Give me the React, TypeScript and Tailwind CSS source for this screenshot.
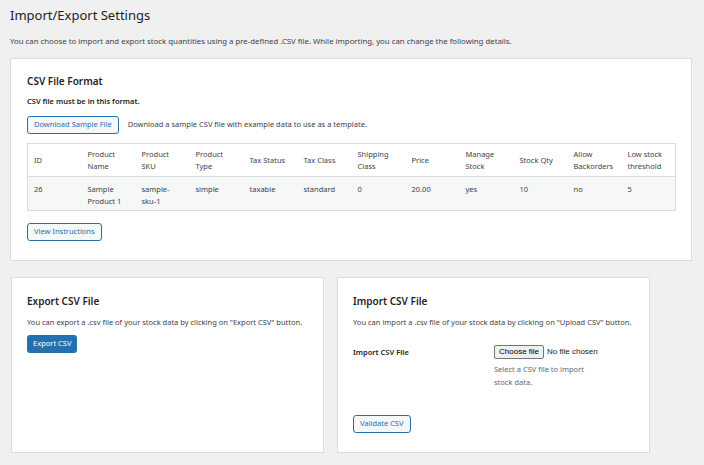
const font = { fontFamily: '"Noto Sans", "Open Sans", sans-serif' };

const columns = [
  "ID",
  "Product Name",
  "Product SKU",
  "Product Type",
  "Tax Status",
  "Tax Class",
  "Shipping Class",
  "Price",
  "Manage Stock",
  "Stock Qty",
  "Allow Backorders",
  "Low stock threshold",
];

const sampleRow = [
  "26",
  "Sample Product 1",
  "sample-sku-1",
  "simple",
  "taxable",
  "standard",
  "0",
  "20.00",
  "yes",
  "10",
  "no",
  "5",
];

function SecondaryButton({ children }: { children: React.ReactNode }) {
  return (
    <button className="h-[18px] rounded-[3px] border border-[#2271b1] bg-[#f6f7f7] px-[6px] text-[7.5px] leading-none text-[#2271b1]">
      {children}
    </button>
  );
}

export default function App() {
  return (
    <div
      className="min-h-[465px] w-[704px] bg-[#f0f0f1] px-[10px] pt-[7px] text-[7.5px] text-[#3c434a]"
      style={font}
    >
      <h1 className="text-[13px] leading-[16px] text-[#1d2327]">Import/Export Settings</h1>
      <p className="mt-[12px] text-[7.8px] leading-[12px]">
        You can choose to import and export stock quantities using a pre-defined .CSV file. While
        importing, you can change the following details.
      </p>

      {/* CSV format card */}
      <section className="mt-[11px] h-[203px] w-[682px] border border-[#dcdcde] bg-white px-[16px] pt-[15px]">
        <h2 className="text-[10px] font-semibold leading-[14px] text-[#1d2327]">CSV File Format</h2>
        <p className="mt-[7px] font-semibold leading-[12px] text-[#1d2327]">
          CSV file must be in this format.
        </p>
        <div className="mt-[9px] flex items-center gap-[9px]">
          <SecondaryButton>Download Sample File</SecondaryButton>
          <span>Download a sample CSV file with example data to use as a template.</span>
        </div>

        <table className="mt-[9px] w-[648px] table-fixed border-collapse border border-[#dcdcde]">
          <thead>
            <tr className="h-[33px] border-b border-[#dcdcde] bg-white">
              {columns.map((c) => (
                <th key={c} className="w-[54px] px-[6px] text-left align-middle font-normal leading-[12px]">
                  {c}
                </th>
              ))}
            </tr>
          </thead>
          <tbody>
            <tr className="h-[34px] bg-[#f6f7f7]">
              {sampleRow.map((v, i) => (
                <td key={i} className="px-[6px] pt-[6px] align-top leading-[12px]">
                  {v}
                </td>
              ))}
            </tr>
          </tbody>
        </table>

        <div className="mt-[12px]">
          <SecondaryButton>View Instructions</SecondaryButton>
        </div>
      </section>

      {/* Export / Import cards */}
      <div className="mt-[16px] flex gap-[13px] pl-[1px]">
        <section className="h-[176px] w-[313px] border border-[#dcdcde] bg-white px-[15px] pt-[16px]">
          <h2 className="text-[10px] font-semibold leading-[14px] text-[#1d2327]">Export CSV File</h2>
          <p className="mt-[8px] leading-[12px]">
            You can export a .csv file of your stock data by clicking on "Export CSV" button.
          </p>
          <button className="mt-[7px] h-[18px] rounded-[3px] bg-[#2271b1] px-[6px] text-[7.5px] leading-none text-white">
            Export CSV
          </button>
        </section>

        <section className="h-[176px] w-[313px] border border-[#dcdcde] bg-white px-[15px] pt-[16px]">
          <h2 className="text-[10px] font-semibold leading-[14px] text-[#1d2327]">Import CSV File</h2>
          <p className="mt-[8px] leading-[12px]">
            You can import a .csv file of your stock data by clicking on "Upload CSV" button.
          </p>
          <div className="mt-[17px] flex">
            <div className="w-[141px] pt-[1px] font-semibold leading-[12px] text-[#1d2327]">
              Import CSV File
            </div>
            <div>
              <div className="flex items-center gap-[3px]" style={{ fontFamily: '"Liberation Sans", Arial, sans-serif' }}>
                <span className="flex h-[14px] items-center rounded-[2px] border border-[#767676] bg-[#efefef] px-[4px] text-[8px] text-black">
                  Choose file
                </span>
                <span className="text-[8px] text-[#1d2327]">No file chosen</span>
              </div>
              <p className="mt-[4px] w-[110px] leading-[13px] text-[#646970]">
                Select a CSV file to import stock data.
              </p>
            </div>
          </div>
          <div className="mt-[26px]">
            <SecondaryButton>Validate CSV</SecondaryButton>
          </div>
        </section>
      </div>
    </div>
  );
}
